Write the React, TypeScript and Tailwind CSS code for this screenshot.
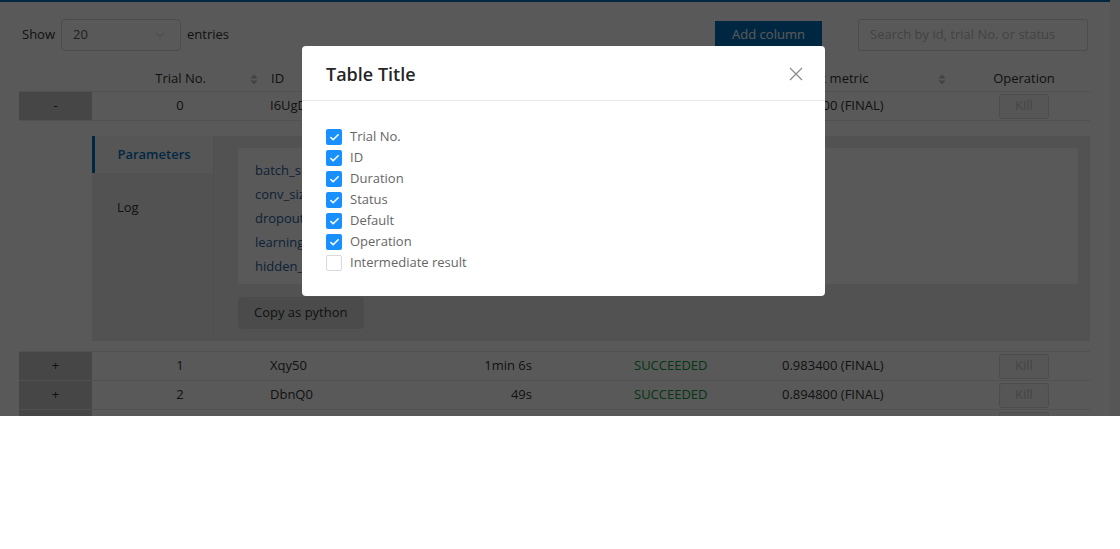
import { Check, ChevronDown } from "lucide-react"

const rows = [
  { no: 1, id: "Xqy50", duration: "1min 6s", status: "SUCCEEDED", metric: "0.983400 (FINAL)" },
  { no: 2, id: "DbnQ0", duration: "49s", status: "SUCCEEDED", metric: "0.894800 (FINAL)" },
  { no: 3, id: "Kp2aT", duration: "52s", status: "SUCCEEDED", metric: "0.910200 (FINAL)" },
]

const params = [
  "batch_size: 32",
  "conv_size: 5",
  "dropout_rate: 0.5",
  "learning_rate: 0.001",
  "hidden_size: 1024",
]

const columns = [
  { label: "Trial No.", checked: true },
  { label: "ID", checked: true },
  { label: "Duration", checked: true },
  { label: "Status", checked: true },
  { label: "Default", checked: true },
  { label: "Operation", checked: true },
  { label: "Intermediate result", checked: false },
]

function SortIcon() {
  return (
    <svg width="8" height="11" viewBox="0 0 8 11" className="shrink-0">
      <path d="M4 0.5 L7.5 4.5 H0.5 Z" fill="#bfbfbf" />
      <path d="M4 10.5 L7.5 6.5 H0.5 Z" fill="#bfbfbf" />
    </svg>
  )
}

function KillButton() {
  return (
    <button className="h-[25px] w-[50px] rounded-[3px] border border-[#d9d9d9] bg-[#f5f5f5] text-[13px] text-[#c8c8c8]">
      Kill
    </button>
  )
}

function TrialRow({ sign, no, id, duration, status, metric }: { sign: string; no: number; id: string; duration: string; status: string; metric: string }) {
  return (
    <div className="flex h-[29px] items-center border-b border-[#e8e8e8] text-[13px] text-[#333]">
      <div className="flex h-full w-[73px] items-center justify-center bg-[#c8c8c8]">{sign}</div>
      <div className="w-[170px] pl-[6px] text-center">{no}</div>
      <div className="w-[178px] pl-[8px]">{id}</div>
      <div className="w-[100px] pr-[8px] text-right">{duration}</div>
      <div className="w-[234px] pl-[94px] text-[#0a9a3a]">{status}</div>
      <div className="w-[184px] pl-[8px]">{metric}</div>
      <div className="flex w-[132px] justify-center">
        <KillButton />
      </div>
    </div>
  )
}

function Modal() {
  return (
    <div className="absolute inset-0 bg-black/65 pl-[302px] pt-[46px]">
      <div className="w-[523px] rounded-[4px] bg-white">
        <div className="flex h-[55px] items-center justify-between border-b border-[#e8e8e8] pl-[24px] pr-[22px] pt-[2px]">
          <span className="text-[18px] font-semibold text-[#262626]">Table Title</span>
          <svg width="14" height="14" viewBox="0 0 14 14">
            <path d="M1 1 L13 13 M13 1 L1 13" stroke="#8c8c8c" strokeWidth="1.3" />
          </svg>
        </div>
        <div className="flex flex-col gap-[5px] px-[24px] pb-[25px] pt-[28px]">
          {columns.map((c) => (
            <label key={c.label} className="flex h-[16px] items-center gap-[8px] text-[13px] text-[#666]">
              {c.checked ? (
                <span className="flex h-[16px] w-[16px] items-center justify-center rounded-[2px] bg-[#1890ff]">
                  <Check size={11} strokeWidth={3.5} color="#fff" />
                </span>
              ) : (
                <span className="h-[16px] w-[16px] rounded-[2px] border border-[#d9d9d9] bg-white" />
              )}
              {c.label}
            </label>
          ))}
        </div>
      </div>
    </div>
  )
}

export default function App() {
  return (
    <div className="bg-white" style={{ fontFamily: '"Open Sans", "Noto Sans", sans-serif' }}>
      <div className="relative flex h-[416px] overflow-hidden">
        <div className="flex-1">
          <div className="h-[2px] bg-[#0071bc]" />
          <div className="pl-[19px] pr-[20px]">
            <div className="mt-[17px] flex h-[32px] items-center pr-[2px] text-[13px] text-[#333]">
              <span className="pl-[3px]">Show</span>
              <div className="ml-[6px] flex h-[32px] w-[120px] items-center justify-between rounded-[4px] border border-[#d9d9d9] pl-[11px] pr-[13px] text-[#595959]">
                20
                <ChevronDown size={14} color="#bfbfbf" strokeWidth={1.5} />
              </div>
              <span className="ml-[6px]">entries</span>
              <div className="flex-1" />
              <button className="h-[29px] w-[107px] bg-[#0071bc] text-[13px] text-white">Add column</button>
              <div className="ml-[36px] flex h-[32px] w-[230px] items-center rounded-[2px] border border-[#d9d9d9] pl-[11px] text-[13px] text-[#bfbfbf]">
                Search by id, trial No. or status
              </div>
            </div>

            <div className="mt-[16px] flex h-[25px] items-center border-b border-[#e8e8e8] text-[13px] text-[#333]">
              <div className="w-[73px]" />
              <div className="flex w-[170px] items-center justify-end pr-[4px]">
                <span className="mr-[44px]">Trial No.</span>
                <SortIcon />
              </div>
              <div className="flex w-[178px] items-center justify-between pl-[9px] pr-[8px]">
                ID
                <SortIcon />
              </div>
              <div className="flex w-[100px] items-center justify-between pl-[8px] pr-[8px]">
                Duration
                <SortIcon />
              </div>
              <div className="flex w-[234px] items-center pl-[94px]">Status</div>
              <div className="flex w-[184px] items-center justify-between pl-[8px] pr-[12px]">
                Default metric
                <SortIcon />
              </div>
              <div className="w-[132px] text-center">Operation</div>
            </div>

            <TrialRow sign="-" no={0} id="I6UgD" duration="1min 2s" status="SUCCEEDED" metric="0.981200 (FINAL)" />

            <div className="border-b border-[#e8e8e8] pb-[10px] pl-[73px] pt-[15px]">
              <div className="flex h-[205px] bg-[#ececec]">
                <div className="w-[122px] border-r border-[#e2e2e2] text-[13px]">
                  <div className="flex h-[37px] items-center justify-center border-l-[3px] border-[#0071bc] bg-[#f7f7f7] font-semibold text-[#0071bc]">
                    Parameters
                  </div>
                  <div className="flex h-[70px] items-center pl-[25px] text-[#333]">Log</div>
                </div>
                <div className="flex-1 pl-[24px] pr-[12px] pt-[12px]">
                  <div className="h-[136px] bg-white pl-[17px] pt-[10px] text-[13px] text-[#2a5f9e]">
                    {params.map((p) => (
                      <div key={p} className="h-[24px] leading-[24px]">
                        {p}
                      </div>
                    ))}
                  </div>
                  <button className="mt-[13px] h-[32px] rounded-[4px] bg-[#d8d8d8] px-[16px] text-[13px] text-[#333]">
                    Copy as python
                  </button>
                </div>
              </div>
            </div>

            {rows.map((r) => (
              <TrialRow key={r.no} sign="+" {...r} />
            ))}
          </div>
        </div>
        <div className="w-[10px] bg-[#f5f5f5]" />
        <Modal />
      </div>
    </div>
  )
}
